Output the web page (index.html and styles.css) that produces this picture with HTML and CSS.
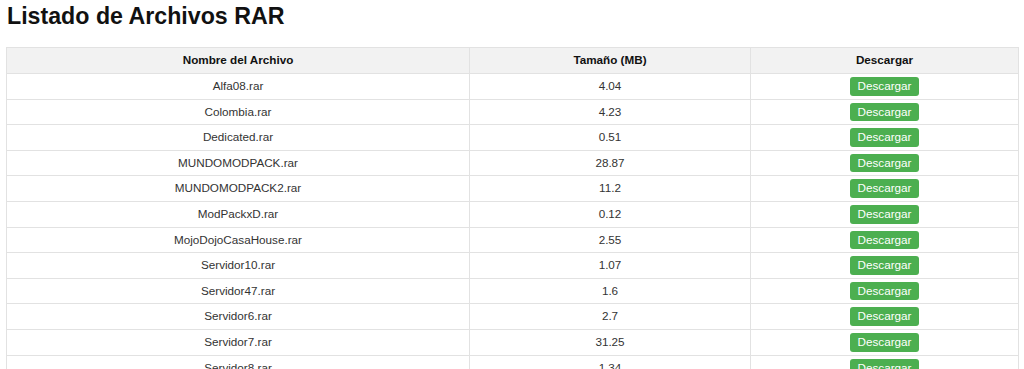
FILE: index.html
```html
<!DOCTYPE html>
<html lang="es">
<head>
<meta charset="utf-8">
<title>Listado de Archivos RAR</title>
<link rel="stylesheet" href="styles.css">
</head>
<body>
<h1 class="title">Listado de Archivos RAR</h1>
<table class="files">
  <colgroup>
    <col class="c-name">
    <col class="c-size">
    <col class="c-dl">
  </colgroup>
  <thead>
    <tr><th>Nombre del Archivo</th><th>Tamaño (MB)</th><th>Descargar</th></tr>
  </thead>
  <tbody>
    <tr><td>Alfa08.rar</td><td>4.04</td><td class="dl"><a class="btn" href="#">Descargar</a></td></tr>
    <tr><td>Colombia.rar</td><td>4.23</td><td class="dl"><a class="btn" href="#">Descargar</a></td></tr>
    <tr><td>Dedicated.rar</td><td>0.51</td><td class="dl"><a class="btn" href="#">Descargar</a></td></tr>
    <tr><td>MUNDOMODPACK.rar</td><td>28.87</td><td class="dl"><a class="btn" href="#">Descargar</a></td></tr>
    <tr><td>MUNDOMODPACK2.rar</td><td>11.2</td><td class="dl"><a class="btn" href="#">Descargar</a></td></tr>
    <tr><td>ModPackxD.rar</td><td>0.12</td><td class="dl"><a class="btn" href="#">Descargar</a></td></tr>
    <tr><td>MojoDojoCasaHouse.rar</td><td>2.55</td><td class="dl"><a class="btn" href="#">Descargar</a></td></tr>
    <tr><td>Servidor10.rar</td><td>1.07</td><td class="dl"><a class="btn" href="#">Descargar</a></td></tr>
    <tr><td>Servidor47.rar</td><td>1.6</td><td class="dl"><a class="btn" href="#">Descargar</a></td></tr>
    <tr><td>Servidor6.rar</td><td>2.7</td><td class="dl"><a class="btn" href="#">Descargar</a></td></tr>
    <tr><td>Servidor7.rar</td><td>31.25</td><td class="dl"><a class="btn" href="#">Descargar</a></td></tr>
    <tr><td>Servidor8.rar</td><td>1.34</td><td class="dl"><a class="btn" href="#">Descargar</a></td></tr>
    <tr><td>Servidor9.rar</td><td>0.88</td><td class="dl"><a class="btn" href="#">Descargar</a></td></tr>
  </tbody>
</table>
</body>
</html>
```
FILE: styles.css
```css
html, body {
  margin: 0;
  padding: 0;
  background: #fff;
}
body {
  padding: 0 6px;
  font-family: "Liberation Sans", Arial, sans-serif;
  color: #333;
  font-size: 11.7px;
}
.title {
  margin: 2px 0 0 1px;
  font-size: 23.2px;
  font-weight: bold;
  color: #111;
  line-height: 28px;
  height: 45px;
}
.files {
  width: 1012px;
  border-collapse: collapse;
  table-layout: fixed;
}
.c-name { width: 463px; }
.c-size { width: 281px; }
.c-dl { width: 268px; }
.files th,
.files td {
  border: 1px solid #e2e2e2;
  text-align: center;
  padding: 5px 4px;
  line-height: 14.6px;
  font-size: 11.7px;
}
.files th {
  background: #f2f2f2;
  color: #111;
  font-weight: bold;
  padding: 5px 4px 5.4px;
}
.files td.dl {
  padding: 3px 4px;
}
.btn {
  display: inline-block;
  vertical-align: top;
  background: #4caf50;
  color: #fff;
  text-decoration: none;
  padding: 2px 8px;
  border-radius: 3px;
  line-height: 14.6px;
}
```
